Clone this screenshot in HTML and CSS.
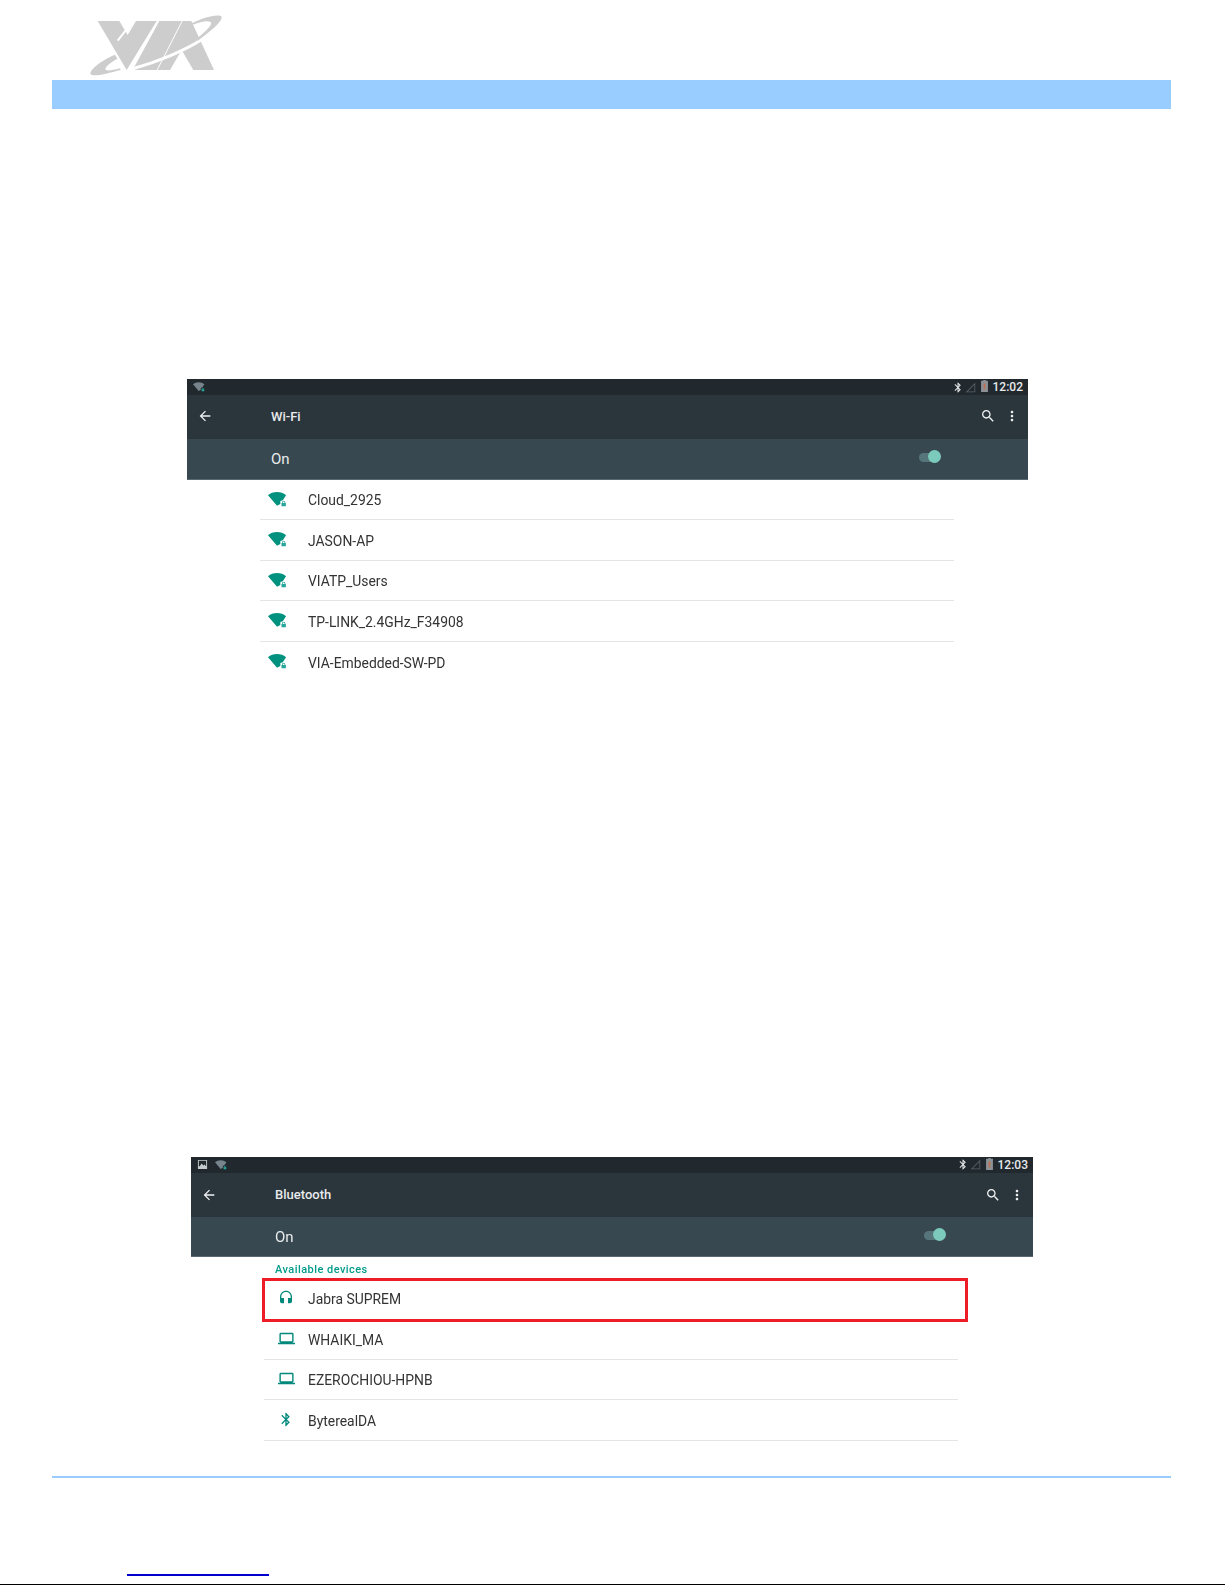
FILE: index.html
```html
<!DOCTYPE html>
<html lang="en">
<head>
<meta charset="utf-8">
<title>VIA Wi-Fi and Bluetooth settings</title>
<link rel="stylesheet" href="styles.css">
</head>
<body>
<svg class="defs" width="0" height="0" aria-hidden="true">
  <symbol id="i-back" viewBox="0 0 24 24"><path d="M20 11H7.83l5.59-5.59L12 4l-8 8 8 8 1.41-1.41L7.83 13H20v-2z"/></symbol>
  <symbol id="i-search" viewBox="0 0 24 24"><path d="M15.5 14h-.79l-.28-.27C15.41 12.59 16 11.11 16 9.5 16 5.91 13.09 3 9.5 3S3 5.91 3 9.5 5.91 16 9.5 16c1.61 0 3.09-.59 4.23-1.57l.27.28v.79l5 4.99L20.49 19l-4.99-5zm-6 0C7.01 14 5 11.99 5 9.5S7.01 5 9.5 5 14 7.01 14 9.5 11.99 14 9.5 14z"/></symbol>
  <symbol id="i-more" viewBox="0 0 24 24"><path d="M12 8c1.1 0 2-.9 2-2s-.9-2-2-2-2 .9-2 2 .9 2 2 2zm0 2c-1.1 0-2 .9-2 2s.9 2 2 2 2-.9 2-2-.9-2-2-2zm0 6c-1.1 0-2 .9-2 2s.9 2 2 2 2-.9 2-2-.9-2-2-2z"/></symbol>
  <symbol id="i-bt" viewBox="0 0 24 24"><path d="M17.71 7.71L12 2h-1v7.59L6.41 5 5 6.41 10.59 12 5 17.59 6.41 19 11 14.41V22h1l5.71-5.71-4.3-4.29 4.3-4.29zM13 5.83l1.88 1.88L13 9.59V5.83zm1.88 10.46L13 18.17v-3.76l1.88 1.88z"/></symbol>
  <symbol id="i-laptop" viewBox="0 0 24 24"><path d="M20 18c1.1 0 1.99-.9 1.99-2L22 6c0-1.1-.9-2-2-2H4c-1.1 0-2 .9-2 2v10c0 1.1.9 2 2 2H0v2h24v-2h-4zM4 6h16v10H4V6z"/></symbol>
  <symbol id="i-headset" viewBox="0 0 24 24"><path d="M12 1c-4.97 0-9 4.03-9 9v7c0 1.66 1.34 3 3 3h3v-8H5v-2c0-3.87 3.13-7 7-7s7 3.13 7 7v2h-4v8h3c1.66 0 3-1.34 3-3v-7c0-4.97-4.03-9-9-9z"/></symbol>
  <symbol id="i-wifi" viewBox="0 0 20 16"><path d="M0 3.4C2.6 1.2 5.9 0 9.5 0s6.9 1.2 9.5 3.4L15.6 8.6 13 9.6V12.6L9.5 14.6z"/><path class="lock" d="M14.8 11.6v-.8a1.7 1.7 0 0 1 3.4 0v.8h.6V15h-4.6v-3.4zm.8 0h1.8v-.8a.9.9 0 0 0-1.8 0z"/></symbol>
  <symbol id="i-signal" viewBox="0 0 14 14"><path d="M13 1v12H1zM12 3.4L3.4 12H12z"/></symbol>
  <symbol id="i-battery" viewBox="0 0 8 14"><path class="batt" d="M2.5 0h3v1H8v13H0V1h2.5z"/><path class="batt-low" d="M3 4h2v5H3zM3 10h2v1.5H3z"/></symbol>
  <symbol id="i-image" viewBox="0 0 12 12"><path d="M1 1h10v10H1zM2 2v6h8V2zM3 8l2-3 2 2 1-1 2 2z"/></symbol>
</svg>

<header class="page-head">
  <svg class="logo" viewBox="264 36 420 200" role="img" aria-label="VIA">
    <path class="logo-fill" d="M293 63H358L383 105 408 63H470L380 210Z"/>
    <path class="logo-cut" d="M392 72 353 122"/>
    <path class="logo-fill" d="M478 63H545L470 210H398Z"/>
    <path class="logo-fill" d="M548 63H574L642 210H580L545 150 510 210H473Z"/>
    <path class="logo-cut wide" d="M396 207C470 186 560 150 606 118"/>
    <path class="logo-fill" d="M550 84C590 58 650 40 664 49 670 62 640 88 594 122L590 116C620 92 640 72 632 66 620 60 590 68 562 82Z"/>
    <path class="logo-fill" d="M345 164C305 180 265 212 272 223 285 232 330 218 362 210L360 205C335 212 318 214 316 208 316 198 335 186 352 176Z"/>
  </svg>
</header>
<div class="band"></div>

<main class="content">
  <section class="shot shot-wifi">
    <div class="statusbar">
      <div class="status-left">
        <svg class="st-wifi"><use href="#i-wifi"/></svg>
      </div>
      <div class="status-right">
        <svg class="st-bt"><use href="#i-bt"/></svg>
        <svg class="st-signal"><use href="#i-signal"/></svg>
        <svg class="st-batt"><use href="#i-battery"/></svg>
        <span class="clock">12:02</span>
      </div>
    </div>
    <div class="toolbar">
      <div class="nav"><svg class="tb-icon"><use href="#i-back"/></svg></div>
      <h2 class="title">Wi-Fi</h2>
      <div class="actions">
        <svg class="tb-icon"><use href="#i-search"/></svg>
        <svg class="tb-icon"><use href="#i-more"/></svg>
      </div>
    </div>
    <div class="switchbar">
      <span class="on">On</span>
      <span class="toggle"><span class="knob"></span></span>
    </div>
    <ul class="list list-wifi">
      <li class="row"><svg class="ic-wifi"><use href="#i-wifi"/></svg><span>Cloud_2925</span></li>
      <li class="row"><svg class="ic-wifi"><use href="#i-wifi"/></svg><span>JASON-AP</span></li>
      <li class="row"><svg class="ic-wifi"><use href="#i-wifi"/></svg><span>VIATP_Users</span></li>
      <li class="row"><svg class="ic-wifi"><use href="#i-wifi"/></svg><span>TP-LINK_2.4GHz_F34908</span></li>
      <li class="row plain"><svg class="ic-wifi"><use href="#i-wifi"/></svg><span>VIA-Embedded-SW-PD</span></li>
    </ul>
  </section>

  <section class="shot shot-bt">
    <div class="statusbar">
      <div class="status-left">
        <svg class="st-image"><use href="#i-image"/></svg>
        <svg class="st-wifi"><use href="#i-wifi"/></svg>
      </div>
      <div class="status-right">
        <svg class="st-bt"><use href="#i-bt"/></svg>
        <svg class="st-signal"><use href="#i-signal"/></svg>
        <svg class="st-batt"><use href="#i-battery"/></svg>
        <span class="clock">12:03</span>
      </div>
    </div>
    <div class="toolbar">
      <div class="nav"><svg class="tb-icon"><use href="#i-back"/></svg></div>
      <h2 class="title">Bluetooth</h2>
      <div class="actions">
        <svg class="tb-icon"><use href="#i-search"/></svg>
        <svg class="tb-icon"><use href="#i-more"/></svg>
      </div>
    </div>
    <div class="switchbar">
      <span class="on">On</span>
      <span class="toggle"><span class="knob"></span></span>
    </div>
    <h3 class="subhead">Available devices</h3>
    <ul class="list list-bt">
      <li class="row plain highlighted"><span class="dev"><svg class="ic-head"><use href="#i-headset"/></svg></span><span>Jabra SUPREM</span></li>
      <li class="row"><span class="dev"><svg class="ic-lap"><use href="#i-laptop"/></svg></span><span>WHAIKI_MA</span></li>
      <li class="row"><span class="dev"><svg class="ic-lap"><use href="#i-laptop"/></svg></span><span>EZEROCHIOU-HPNB</span></li>
      <li class="row"><span class="dev"><svg class="ic-bt"><use href="#i-bt"/></svg></span><span>ByterealDA</span></li>
    </ul>
  </section>
</main>

<footer class="page-foot">
  <div class="foot-line"></div>
  <a class="foot-link" href="#" aria-label="VIA website"></a>
  <div class="edge"></div>
</footer>
</body>
</html>
```
FILE: styles.css
```css
*, *::before, *::after { box-sizing: border-box; }
html, body { margin: 0; padding: 0; }
body {
  width: 1225px;
  height: 1585px;
  overflow: hidden;
  background: #fff;
  font-family: Roboto, "Liberation Sans", sans-serif;
  display: flex;
  flex-direction: column;
}
.defs { display: block; height: 0; }
ul { list-style: none; margin: 0; padding: 0; }
h2, h3 { margin: 0; font: inherit; }

.page-head { height: 80px; padding: 12px 0 0 88px; flex: none; }
.logo { display: block; width: 140px; height: 66.7px; }
.logo-fill { fill: #cdcdcd; }
.logo-cut { fill: none; stroke: #fff; stroke-width: 6; }
.logo-cut.wide { stroke-width: 9; }
.band { height: 29px; margin: 0 54px 0 52px; background: #99ccff; flex: none; }

.content { flex: none; }
.shot { filter: blur(0.45px); }
.shot-wifi { width: 841px; margin: 270px 0 0 187px; }
.shot-bt { width: 842px; margin: 474.5px 0 0 191px; }

.statusbar {
  height: 16px;
  background: #21292f;
  display: flex;
  justify-content: space-between;
  align-items: center;
  padding: 0 5px 0 6px;
}
.status-left, .status-right { display: flex; align-items: center; }
.status-right { color: #e8eaeb; }
.st-wifi { width: 12px; height: 10px; fill: #78848b; }
.st-image { width: 11px; height: 11px; fill: #c5cacc; margin-right: 7px; }
.st-bt { width: 12px; height: 13px; fill: #e3e5e6; margin-right: 1.5px; }
.st-signal { width: 11px; height: 11px; fill: #59636a; margin: 0 5px 0 0; }
.st-batt { width: 7px; height: 12px; margin: 0 4.5px 2px 0; }
.batt { fill: #8a9296; }
.batt-low { fill: #c86a4a; }
.clock { font-size: 12px; font-weight: 500; line-height: 16px; }

.toolbar {
  height: 44px;
  background: #2a353c;
  color: #f0f2f2;
  display: flex;
  align-items: center;
}
.shot-wifi .toolbar { padding-bottom: 2px; }
.nav { width: 84px; padding-left: 10px; display: flex; align-items: center; flex: none; }
.tb-icon { width: 16px; height: 16px; fill: #f0f2f2; display: block; }
.title { flex: 1; font-size: 13px; font-weight: 500; color: #e8ebeb; }
.actions { display: flex; gap: 8px; padding-right: 8px; }

.switchbar {
  height: 40.5px;
  background: #374851;
  color: #e9ecec;
  display: flex;
  align-items: center;
  justify-content: space-between;
  padding: 0 84px 0 84px;
  border-bottom: 1px solid #586971;
}
.on { font-size: 15px; }
.toggle {
  position: relative;
  width: 21px;
  height: 9px;
  border-radius: 5px;
  background: #56757a;
  margin-bottom: 3px;
  margin-right: 4px;
}
.knob {
  position: absolute;
  right: -1px;
  top: -2.5px;
  width: 13px;
  height: 13px;
  border-radius: 50%;
  background: #7ccabc;
}

.list { width: 694px; margin-left: 73px; color: #333; font-size: 13.9px; }
.row {
  height: 40.5px;
  display: flex;
  align-items: center;
  border-bottom: 1px solid #e5e5e5;
  position: relative;
}
.row.plain { border-bottom-color: transparent; }
.list-wifi .row { height: 40.6px; padding: 2px 0 0 8px; }
.list-bt .row { padding-top: 1px; }
.ic-wifi { width: 19px; height: 15.2px; fill: #00927f; margin: 0 21px 2px 0; flex: none; }
.lock { fill: #26a69a; }
.dev { width: 44px; display: flex; justify-content: center; flex: none; }
.ic-head { width: 16px; height: 16px; fill: #00897b; margin-bottom: 3px; }
.ic-lap { width: 17px; height: 17px; fill: #00897b; margin-bottom: 3px; }
.ic-bt { width: 16px; height: 17px; fill: #00897b; margin-bottom: 2px; }
.subhead { margin: 5px 0 0 84px; height: 16.5px; line-height: 16px; color: #009b88; font-size: 11px; font-weight: 500; letter-spacing: 0.45px; }
.highlighted::after {
  content: "";
  position: absolute;
  left: -2px;
  top: -1px;
  width: 706px;
  height: 44px;
  border: 3px solid #ee1c25;
}

.page-foot { flex: none; margin-top: 35.5px; position: relative; flex-grow: 1; display: flex; flex-direction: column; }
.foot-line { height: 2px; margin: 0 54px 0 52px; background: #99ccff; }
.foot-link { display: block; width: 142px; height: 2px; margin: 96px 0 0 127px; background: #0000cc; }
.edge { height: 1px; background: #000; margin-top: auto; }
```
